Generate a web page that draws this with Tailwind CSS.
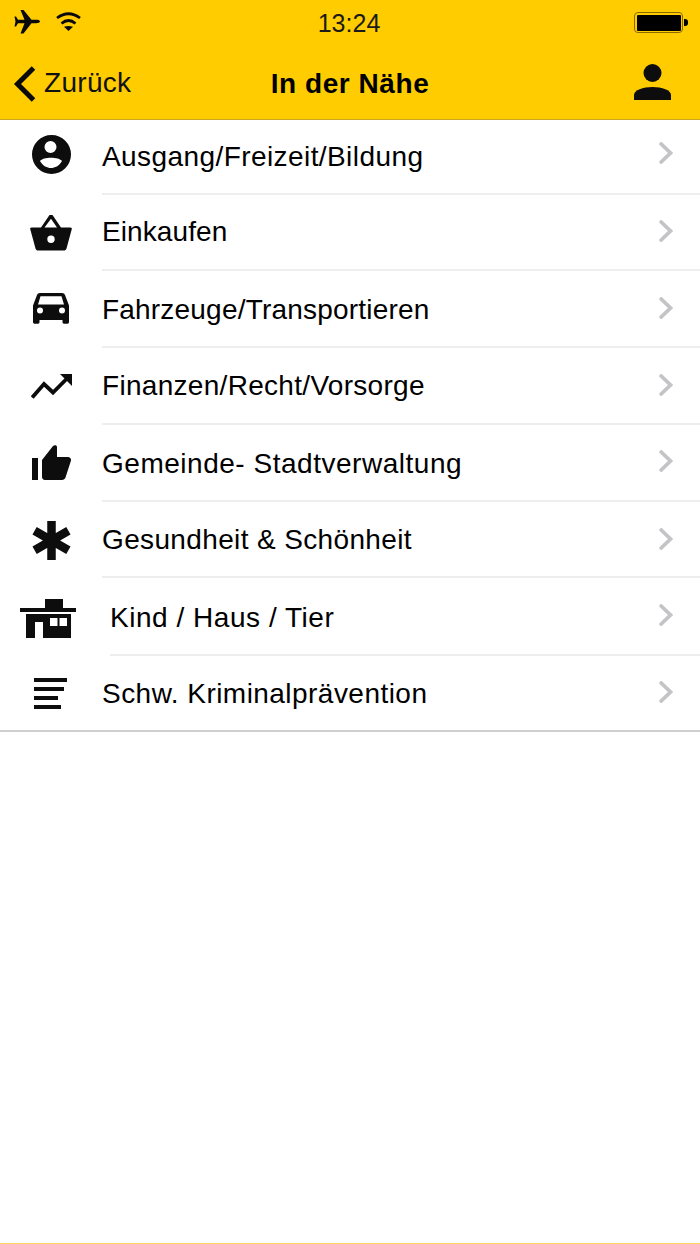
<!DOCTYPE html>
<html lang="de"><head><meta charset="utf-8"><script src="https://cdn.jsdelivr.net/npm/@tailwindcss/browser@4"></script></head>
<body class="bg-white">
<div class="w-[700px] h-[1244px] flex flex-col bg-white text-black font-['Liberation_Sans',sans-serif] overflow-hidden">
  <header class="h-[120px] shrink-0 bg-[#ffcc00] border-b border-[#c9a520] flex flex-col">
    <div class="h-[46px] relative flex items-center justify-center text-[25px] text-[#1a1a1a] pt-[1px]">
      <svg class="absolute left-[14px] top-[10px]" width="26" height="24" viewBox="0 0 26 24" fill="#0a0a0a"><path d="M26 11.500C26 10.200 24 9.800 22 9.800H17.500L9.500 0H6.500L10.500 9.800H4L2 6.500H.5L1.500 11.500.5 16.500H2L4 13.200H10.500L6.500 23.500H9.500L17.500 13.200H22C24 13.200 26 12.800 26 11.500Z"/></svg>
      <svg class="absolute left-[56px] top-[12px]" width="25" height="19" viewBox="0 0 25 19" fill="none" stroke="#0a0a0a" stroke-width="2.700"><path d="M1 6Q12.500-2.500 24 6"/><path d="M5.500 11.500Q12.500 5.500 19.500 11.500"/><path d="M12.500 19 8 14.800Q12.500 13 17 14.800Z" fill="#0a0a0a" stroke="none"/></svg>
      <span class="-ml-[2px]">13:24</span>
      <div class="absolute left-[634px] top-[12px] w-[49px] h-[21px] rounded-[4px] border border-[#8a6a00] p-[1.5px]"><div class="w-full h-full bg-black rounded-[1px]"></div></div>
      <div class="absolute left-[684px] top-[19px] w-[4px] h-[7px] bg-black rounded-r-[3px]"></div>
    </div>
    <div class="flex-1 relative flex items-center justify-center">
      <svg class="absolute left-[13px] top-[20px]" width="23" height="36" viewBox="0 0 23 36" fill="none" stroke="#0a0a0a" stroke-width="5"><path d="M20.500 2 4.500 18 20.500 34"/></svg>
      <span class="absolute left-[44px] top-[19px] text-[28px] leading-[36px] tracking-[0.3px] text-[#111]">Zurück</span>
      <h1 class="text-[28px] font-bold leading-[36px] tracking-[0.55px] mt-[2px]">In der Nähe</h1>
      <svg class="absolute left-[634px] top-[18px]" width="37" height="36" viewBox="0 0 37 36" fill="#0d0d0d"><circle cx="18.500" cy="9" r="9"/><path d="M0 36V31C0 26 9 23 18.500 23S37 26 37 31V36Z"/></svg>
    </div>
  </header>
  <ul class="text-[28px]">
    <li class="h-[75px] flex relative">
      <svg class="absolute left-[32px] top-[15px]" width="39" height="39" viewBox="0 0 39 39"><path fill="#0d0d0d" fill-rule="evenodd" d="M19.500 0a19.500 19.500 0 1 0 0 39 19.500 19.500 0 0 0 0-39ZM18.500 6a6 6 0 1 1 0 12 6 6 0 0 1 0-12ZM8 26C11 21.500 27 21.500 30 26 27 31 23 33 19 33S11 31 8 26Z"/></svg>
      <div class="ml-[102px] flex-1 flex items-center justify-between border-b-2 border-[#eeeeef]"><span class="tracking-[0.42px]">Ausgang/Freizeit/Bildung</span>
      <svg class="mr-[26px] mb-[7px]" width="16" height="22" viewBox="0 0 16 22" fill="none" stroke="#c4c4c7" stroke-width="3.800" stroke-linecap="round"><path d="M3.200 2 12.500 11 3.200 20"/></svg></div>
    </li>
    <li class="h-[76px] flex relative">
      <svg class="absolute left-[30px] top-[20px]" width="42" height="36" viewBox="0 0 42 36"><path fill="#0d0d0d" fill-rule="evenodd" d="M19.500 0H22.500L31 12.500H40.500C41.500 12.500 42 13.300 41.800 14L36.500 33.500C36 35 35 35.500 34 35.500H8C7 35.500 6 35 5.500 33.500L.2 14C0 13.300.5 12.500 1.500 12.500H11ZM21 3.800 14.500 12.500H27ZM21 20.500A3.700 3.700 0 1 0 21 27.900 3.700 3.700 0 0 0 21 20.500Z"/></svg>
      <div class="ml-[102px] flex-1 flex items-center justify-between border-b-2 border-[#eeeeef]"><span class="tracking-[0.1px]">Einkaufen</span>
      <svg class="mr-[26px] mb-[2px]" width="16" height="22" viewBox="0 0 16 22" fill="none" stroke="#c4c4c7" stroke-width="3.800" stroke-linecap="round"><path d="M3.200 2 12.500 11 3.200 20"/></svg></div>
    </li>
    <li class="h-[77px] flex relative">
      <svg class="absolute left-[33px] top-[22px]" width="36" height="31" viewBox="0 0 36 31"><path fill="#0d0d0d" fill-rule="evenodd" d="M7 0H29C30.500 0 31.500.8 32 2L36 12.500V29C36 30 35.300 30.700 34.500 30.700H31C30 30.700 29.500 30 29.500 29V27H6.500V29C6.500 30 6 30.700 5 30.700H1.500C.7 30.700 0 30 0 29V12.500L4 2C4.500.8 5.500 0 7 0ZM7.500 3.300 5 11.500H31L28.500 3.300ZM7 14.500A3 3 0 1 0 7 20.500 3 3 0 0 0 7 14.500ZM29 14.500A3 3 0 1 0 29 20.500 3 3 0 0 0 29 14.500Z"/></svg>
      <div class="ml-[102px] flex-1 flex items-center justify-between border-b-2 border-[#eeeeef]"><span class="mt-[3px] tracking-[0.2px]">Fahrzeuge/Transportieren</span>
      <svg class="mr-[26px] mb-[1px]" width="16" height="22" viewBox="0 0 16 22" fill="none" stroke="#c4c4c7" stroke-width="3.800" stroke-linecap="round"><path d="M3.200 2 12.500 11 3.200 20"/></svg></div>
    </li>
    <li class="h-[77px] flex relative">
      <svg class="absolute left-[31px] top-[26px]" width="41" height="25" viewBox="0 0 41 25"><path fill="none" stroke="#0d0d0d" stroke-width="3.800" d="M1.200 23.500 13 10 22 18.500 37 3.500"/><path fill="#0d0d0d" d="M29 0H41V12Z"/></svg>
      <div class="ml-[102px] flex-1 flex items-center justify-between border-b-2 border-[#eeeeef]"><span class="tracking-[0.3px]">Finanzen/Recht/Vorsorge</span>
      <svg class="mr-[26px] mb-[1px]" width="16" height="22" viewBox="0 0 16 22" fill="none" stroke="#c4c4c7" stroke-width="3.800" stroke-linecap="round"><path d="M3.200 2 12.500 11 3.200 20"/></svg></div>
    </li>
    <li class="h-[77px] flex relative">
      <svg class="absolute left-[32px] top-[20px]" width="39" height="35" viewBox="0 0 39 35"><path fill="#0d0d0d" d="M0 13H6V35H0ZM10 15 21 1C22.500 0 25 0 25 2V12H36C38 12 39.300 13.500 39 15.500L33.500 32.500C33 34 31.500 35 30 35H13C11 35 10 33.500 10 32Z"/></svg>
      <div class="ml-[102px] flex-1 flex items-center justify-between border-b-2 border-[#eeeeef]"><span class="mt-[3px] tracking-[0.52px]">Gemeinde- Stadtverwaltung</span>
      <svg class="mr-[26px] mb-[3px]" width="16" height="22" viewBox="0 0 16 22" fill="none" stroke="#c4c4c7" stroke-width="3.800" stroke-linecap="round"><path d="M3.200 2 12.500 11 3.200 20"/></svg></div>
    </li>
    <li class="h-[76px] flex relative">
      <svg class="absolute left-[32px] top-[19px]" width="39" height="39" viewBox="0 0 39 39" fill="none" stroke="#0d0d0d" stroke-width="8.500"><path d="M19.500 0V39M2.600 9.750 36.400 29.250M2.600 29.250 36.400 9.750"/></svg>
      <div class="ml-[102px] flex-1 flex items-center justify-between border-b-2 border-[#eeeeef]"><span class="mt-[2px] tracking-[0.36px]">Gesundheit &amp; Schönheit</span>
      <svg class="mr-[26px]" width="16" height="22" viewBox="0 0 16 22" fill="none" stroke="#c4c4c7" stroke-width="3.800" stroke-linecap="round"><path d="M3.200 2 12.500 11 3.200 20"/></svg></div>
    </li>
    <li class="h-[78px] flex relative">
      <svg class="absolute left-[20px] top-[21px]" width="56" height="39" viewBox="0 0 56 39"><path fill="#0d0d0d" fill-rule="evenodd" d="M25 0H43V9H56V13H0V9H25ZM6 15H51V39H23V23H15V39H6ZM30 19V27H37.500V19ZM39.500 19V27H47V19Z"/></svg>
      <div class="ml-[110px] flex-1 flex items-center justify-between border-b-2 border-[#eeeeef]"><span class="mt-[4px] tracking-[0.53px]">Kind / Haus / Tier</span>
      <svg class="mr-[26px] mb-[2px]" width="16" height="22" viewBox="0 0 16 22" fill="none" stroke="#c4c4c7" stroke-width="3.800" stroke-linecap="round"><path d="M3.200 2 12.500 11 3.200 20"/></svg></div>
    </li>
    <li class="h-[76px] flex relative">
      <svg class="absolute left-[34px] top-[22px]" width="33" height="31" viewBox="0 0 33 31" fill="#0d0d0d"><rect width="33" height="4"/><rect y="9" width="30" height="4"/><rect y="18" width="24" height="4"/><rect y="27" width="27" height="4"/></svg>
      <div class="w-full pl-[102px] flex items-center justify-between border-b-2 border-[#cfcfd2]"><span class="mt-[2px] tracking-[0.46px]">Schw. Kriminalprävention</span>
      <svg class="mr-[26px] mb-[2px]" width="16" height="22" viewBox="0 0 16 22" fill="none" stroke="#c4c4c7" stroke-width="3.800" stroke-linecap="round"><path d="M3.200 2 12.500 11 3.200 20"/></svg></div>
    </li>
  </ul>
  <div class="flex-1"></div>
  <div class="h-[1px] bg-[#ffd65c]"></div>
</div>
</body></html>
